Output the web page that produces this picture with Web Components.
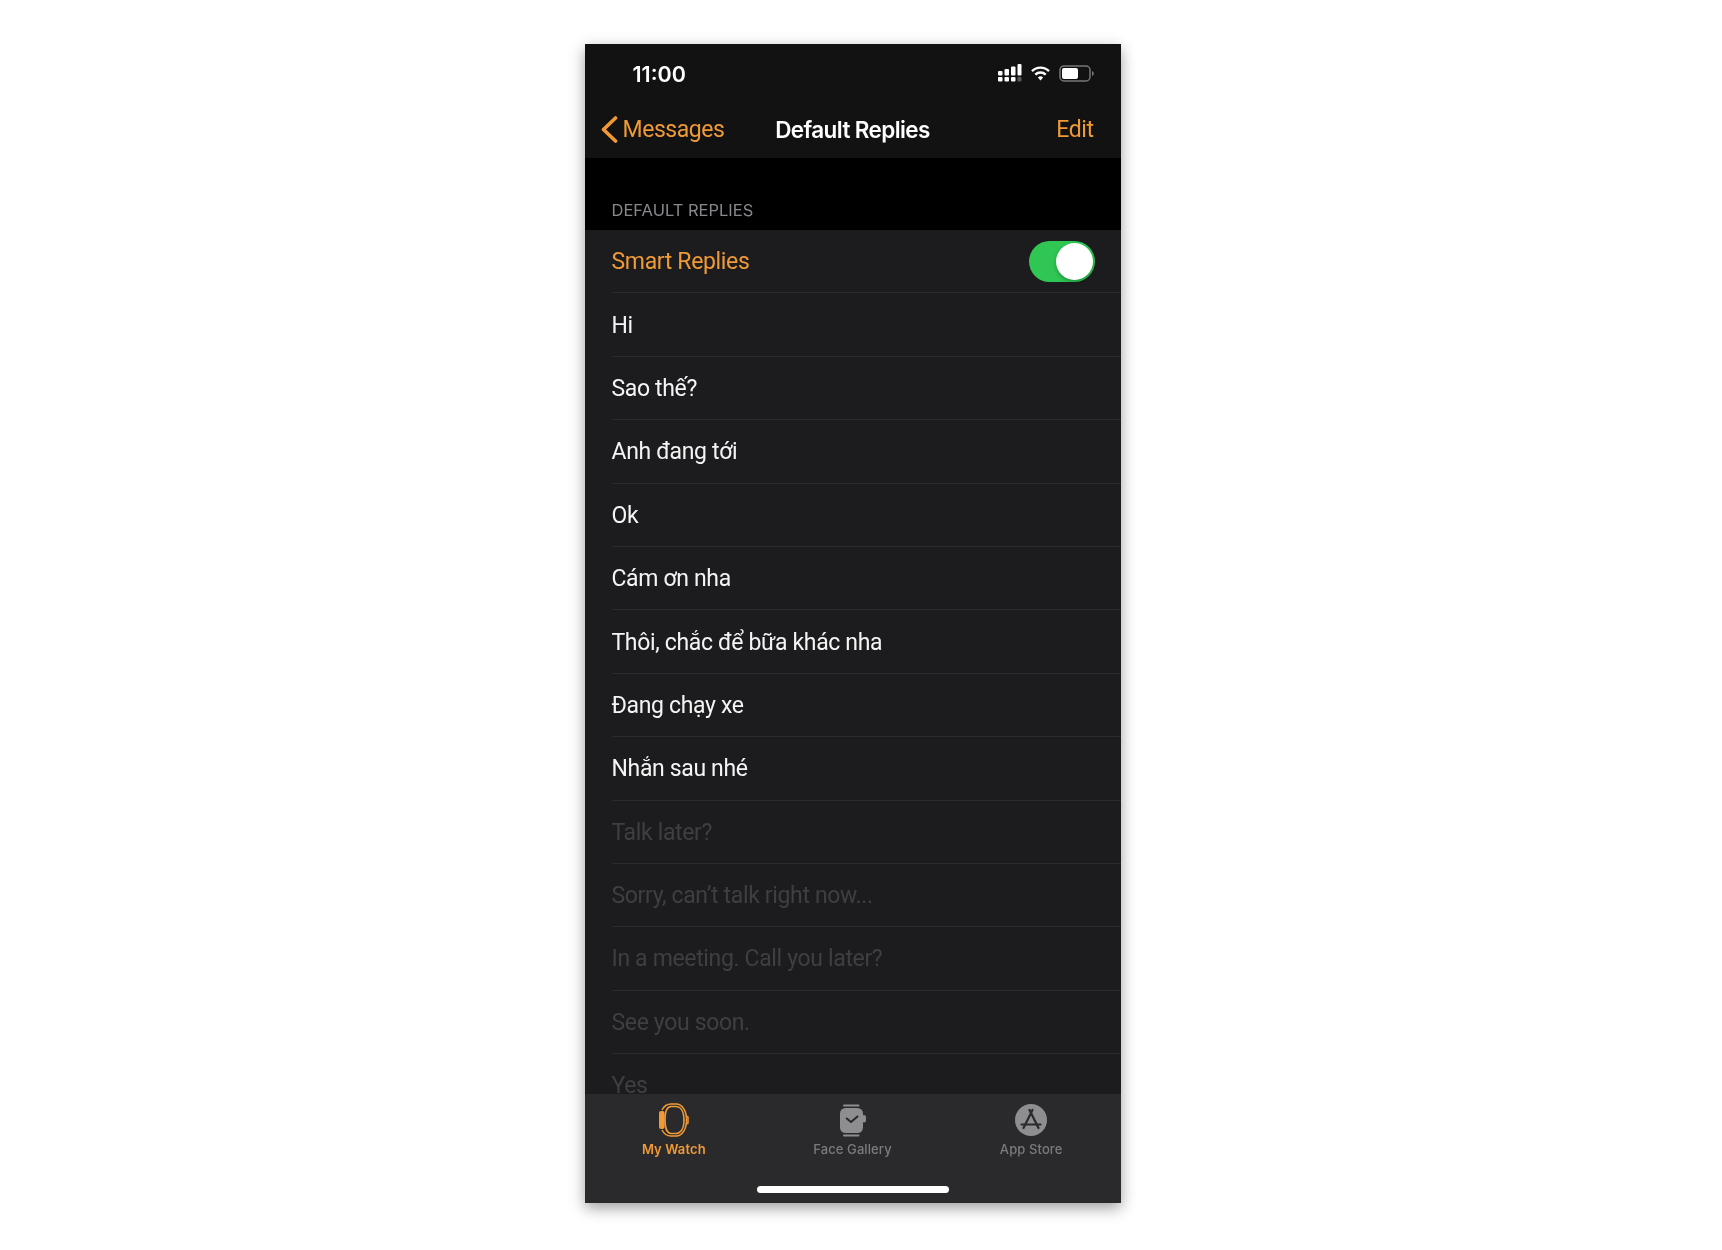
<!DOCTYPE html>
<html lang="vi"><head><meta charset="utf-8"><title>Default Replies</title>
<style>
html,body{margin:0;background:#fff}
body{font-family:Roboto,"Noto Sans",sans-serif}
</style></head><body>
<x-stage>
<x-phone>
  <x-status slot="top" time="11:00"></x-status>
  <x-nav slot="top" back="Messages" title="Default Replies" action="Edit"></x-nav>
  <x-section>DEFAULT REPLIES</x-section>
  <x-row accent toggle>Smart Replies</x-row>
  <x-row>Hi</x-row>
  <x-row>Sao thế?</x-row>
  <x-row>Anh đang tới</x-row>
  <x-row>Ok</x-row>
  <x-row>Cám ơn nha</x-row>
  <x-row>Thôi, chắc để bữa khác nha</x-row>
  <x-row>Đang chạy xe</x-row>
  <x-row>Nhắn sau nhé</x-row>
  <x-row dim>Talk later?</x-row>
  <x-row dim>Sorry, can’t talk right now...</x-row>
  <x-row dim>In a meeting. Call you later?</x-row>
  <x-row dim>See you soon.</x-row>
  <x-row dim>Yes</x-row>
  <x-tabbar slot="bottom">
    <x-tab active label="My Watch" icon="watch"></x-tab>
    <x-tab label="Face Gallery" icon="face"></x-tab>
    <x-tab label="App Store" icon="store"></x-tab>
  </x-tabbar>
</x-phone>
</x-stage>
<script>
const ORANGE='#f09a36';
function def(name,html){
  customElements.define(name,class extends HTMLElement{
    constructor(){super();this.attachShadow({mode:'open'});}
    connectedCallback(){
      this.shadowRoot.innerHTML=typeof html==='function'?html(this):html;
    }
  });
}
def('x-stage',`<style>:host{display:block;padding:44px 0 0 584.5px;height:1206px;width:1137px}</style><slot></slot>`);
def('x-phone',`<style>
:host{display:flex;flex-direction:column;width:536px;height:1159px;background:#000;overflow:hidden;box-shadow:0 5px 14px rgba(0,0,0,.38);filter:blur(.35px)}
.list{flex:1;min-height:0;overflow:hidden}
</style><slot name="top"></slot><div class="list"><slot></slot></div><slot name="bottom"></slot>`);
def('x-status',h=>`<style>
:host{display:flex;align-items:center;justify-content:space-between;height:58px;background:#121212;padding:2px 27px 0 48px;color:#fff;box-sizing:border-box}
.t{font:600 21.5px Inter,sans-serif;letter-spacing:0}
.i{display:flex;align-items:center;gap:9px;margin-top:-2px}
svg{display:block}
</style><span class="t">${h.getAttribute('time')}</span><span class="i">
<svg width="24" height="18" viewBox="0 0 24 18" fill="#fff"><rect x="0" y="7" width="4.5" height="4.5" rx="1"/><rect x="0" y="13" width="4.5" height="4.5" rx="1"/><rect x="6.5" y="5" width="4.5" height="6.5" rx="1"/><rect x="6.5" y="13" width="4.5" height="4.5" rx="1"/><rect x="13" y="2.5" width="4.5" height="9" rx="1"/><rect x="13" y="13" width="4.5" height="4.5" rx="1"/><rect x="19.5" y="0" width="4" height="11.5" rx="1"/><rect x="19.5" y="13" width="4" height="4.5" rx="1" opacity=".3"/></svg>
<svg width="19" height="15" viewBox="0 0 19 15" fill="none" stroke="#fff" stroke-width="2.4"><path d="M1 5.2a12 12 0 0 1 17 0"/><path d="M4.3 8.6a7.4 7.4 0 0 1 10.4 0"/><path d="M9.5 14.6 6.9 11.6a3.6 3.6 0 0 1 5.2 0Z" fill="#fff" stroke="none"/></svg>
<svg width="35" height="17" viewBox="0 0 35 17" fill="none"><rect x="1" y="1" width="30" height="15" rx="4" stroke="#77777a" stroke-width="1.5"/><rect x="3" y="3" width="16" height="11" rx="2" fill="#fff"/><path d="M33 6v5c1.2-.4 1.8-1.4 1.8-2.5S34.200 6.400 33 6Z" fill="#77777a"/></svg>
</span>`);
def('x-nav',h=>`<style>
:host{display:flex;align-items:center;justify-content:space-between;position:relative;height:56px;background:#121212;box-sizing:border-box;padding:0 27px 1px 16px;font:400 23px Roboto,sans-serif;letter-spacing:-.45px;color:${ORANGE}}
.b{display:flex;align-items:center;gap:5px}
.c{position:absolute;left:0;right:0;top:0;bottom:1px;display:flex;align-items:center;justify-content:center;color:#fff;font:600 22.500px Inter,sans-serif;letter-spacing:-.6px}
svg{display:block}
</style><span class="b"><svg width="17" height="27" viewBox="0 0 17 27" fill="none" stroke="${ORANGE}" stroke-width="3.600" stroke-linecap="round" stroke-linejoin="round"><path d="M14.500 2 2.500 13.500l12 11.500"/></svg>${h.getAttribute('back')}</span><span class="c">${h.getAttribute('title')}</span><span>${h.getAttribute('action')}</span>`);
def('x-section',`<style>
:host{display:flex;align-items:flex-end;height:72px;box-sizing:border-box;padding:0 0 10px 27px;background:#000;color:#88888c;font:400 16.500px Inter,sans-serif;letter-spacing:0}
</style><slot></slot>`);
def('x-row',h=>`<style>
:host{display:block;background:#1c1c1e;padding-left:27px;font:400 23px Roboto,sans-serif;letter-spacing:-.35px;color:${h.hasAttribute('accent')?ORANGE:h.hasAttribute('dim')?'#3f3f41':'#f4f4f5'}}
.r{display:flex;align-items:center;justify-content:space-between;height:63.400px;box-sizing:border-box;border-bottom:1px solid #2b2b2d;padding-right:26px}
span{padding-top:1px}
</style><div class="r"><span><slot></slot></span>${h.hasAttribute('toggle')?'<x-toggle></x-toggle>':''}</div>`);
def('x-toggle',`<style>
:host{display:block;width:66px;height:41px;border-radius:21px;background:#2fc653;position:relative}
i{position:absolute;right:2px;top:2px;width:37px;height:37px;border-radius:50%;background:#fff;box-shadow:0 2px 4px rgba(0,0,0,.25)}
</style><i></i>`);
def('x-tabbar',`<style>
:host{display:block;background:#2a2a2c;height:109px;position:relative;flex:none}
.g{display:grid;grid-template-columns:repeat(3,1fr);padding:8px 0 0}
.h{position:absolute;left:172px;width:192px;bottom:10px;height:7px;border-radius:4px;background:#fff}
</style><div class="g"><slot></slot></div><div class="h"></div>`);
const ICONS={
watch:`<svg width="36" height="36" viewBox="0 0 36 36" fill="none" stroke="${ORANGE}" stroke-width="1.500"><path d="M6 8C8 4 11 2 15 2h5c6.500 0 10.500 7 10.500 16S26.500 34 20 34h-5c-4 0-7-2-9-6"/><path d="M9 18C9 9 11 4.800 15 4.500h4.500C25 4.500 28 10 28 18s-3 13.500-8.500 13.500H15C11 31.200 9 27 9 18Z" stroke-width="1.700"/><rect x="3" y="9" width="5.500" height="18" rx="2" fill="${ORANGE}" stroke="none"/><path d="M30 13.500l2 1.500v6l-2 1.500" stroke-width="1.500"/></svg>`,
face:`<svg width="36" height="36" viewBox="0 0 36 36"><path d="M10 3.500h14.500" stroke="#8e8e91" stroke-width="2" stroke-linecap="round"/><path d="M10 33.500h14.500" stroke="#8e8e91" stroke-width="2" stroke-linecap="round"/><rect x="6" y="6" width="23" height="25" rx="5.500" fill="#8e8e91"/><rect x="28" y="13" width="4" height="7.500" rx="2" fill="#8e8e91"/><path d="M12.800 16.500l4.200 3.500 6.500-5.500" fill="none" stroke="#28282a" stroke-width="2" stroke-linecap="round" stroke-linejoin="round"/></svg>`,
store:`<svg width="36" height="36" viewBox="0 0 36 36"><circle cx="18" cy="18" r="16" fill="#8e8e91"/><g fill="none" stroke="#2a2a2c" stroke-width="2.200" stroke-linecap="round"><path d="M16.500 8 25.500 26"/><path d="M19.500 8 10.500 26"/><path d="M8.500 22.500h19"/></g></svg>`};
def('x-tab',h=>`<style>
:host{display:flex;flex-direction:column;align-items:center;color:${h.hasAttribute('active')?ORANGE:'#7b7b7e'};font:${h.hasAttribute('active')?600:500} 13px Inter,sans-serif;letter-spacing:.1px}
svg{display:block}
span{margin-top:3px;line-height:17px}
</style>${ICONS[h.getAttribute('icon')]}<span>${h.getAttribute('label')}</span>`);
</script>
</body></html>
